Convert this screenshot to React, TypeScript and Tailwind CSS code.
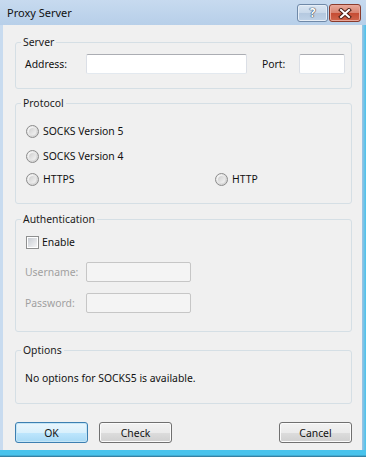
import React from "react";

const font = "font-['Segoe_UI','Noto_Sans',sans-serif] text-[10.4px] leading-[16px] text-[#111]";

function GroupBox({
  title,
  className,
  children,
}: {
  title: string;
  className: string;
  children: React.ReactNode;
}) {
  return (
    <fieldset className={`min-w-0 border border-[#d5dfe5] rounded-[3px] ${className}`}>
      <legend className="ml-[5px] px-[2px] leading-[14px] text-[#1a1a1a]">{title}</legend>
      {children}
    </fieldset>
  );
}

function Radio({ label }: { label: string }) {
  return (
    <span className="flex items-center">
      <span className="w-[13px] h-[13px] rounded-full border border-[#8c8c8c] bg-[radial-gradient(circle_at_35%_35%,#fdfdfd_0%,#e6e6e6_45%,#c4c4c4_100%)] flex items-center justify-center">
        <span className="w-[7px] h-[7px] rounded-full bg-[linear-gradient(135deg,#cfcfcf,#f4f4f4)]" />
      </span>
      <span className="ml-[4px]">{label}</span>
    </span>
  );
}

function TextBox({ width, disabled }: { width: string; disabled?: boolean }) {
  return (
    <div
      className={`${width} h-[20px] rounded-[2px] border ${
        disabled
          ? "bg-[#f4f4f4] border-[#c6c6c6]"
          : "bg-white border-[#abadb3] border-x-[#dbdfe6] border-b-[#e3e9ef]"
      }`}
    />
  );
}

function Button({ label, primary }: { label: string; primary?: boolean }) {
  return (
    <div
      className={`w-[73px] h-[21px] rounded-[3px] border flex items-center justify-center ${
        primary
          ? "border-[#3c7fb1] shadow-[inset_0_0_0_1px_#c4e5f6] bg-[linear-gradient(#eaf6fd_0%,#d9f0fc_50%,#bee6fd_50%,#a7d9f5_100%)]"
          : "border-[#707070] shadow-[inset_0_0_0_1px_#fbfbfb] bg-[linear-gradient(#f2f2f2_0%,#ebebeb_50%,#dddddd_50%,#cfcfcf_100%)]"
      }`}
    >
      {label}
    </div>
  );
}

export default function App() {
  return (
    <div className={`w-[366px] h-[457px] flex flex-col bg-[#bcd4ec] ${font}`}>
      {/* title bar */}
      <div className="h-[25px] flex items-start bg-[linear-gradient(#c7daef,#b7cfe9)]">
        <span className="pl-[7px] pt-[5px] text-[11px]">Proxy Server</span>
        <div className="ml-auto mt-[4px] mr-[5px] flex gap-[1px]">
          <div className="w-[31px] h-[18px] rounded-[3px] border border-[#6f89a8] shadow-[inset_0_0_0_1px_#e6eef7] bg-[linear-gradient(#dbe6f2_0%,#c8d8ea_50%,#b4c8df_50%,#bfd2e7_100%)] flex items-center justify-center">
            <span className="text-white font-bold text-[12px] leading-[12px] [text-shadow:0_0_1px_#2d3e52,0_0_1px_#2d3e52,0_0_1px_#2d3e52]">?</span>
          </div>
          <div className="w-[32px] h-[18px] rounded-[3px] border border-[#8a3b2c] shadow-[inset_0_0_0_1px_#e9a79a] bg-[linear-gradient(#e8a99b_0%,#d8826f_50%,#c54b32_50%,#d0664c_100%)] flex items-center justify-center">
            <svg width="14" height="11" viewBox="0 0 14 11">
              <path d="M3 2 L11 9 M11 2 L3 9" stroke="#4a1d14" strokeWidth="4" strokeLinecap="square" />
              <path d="M3 2 L11 9 M11 2 L3 9" stroke="#ffffff" strokeWidth="2" strokeLinecap="square" />
            </svg>
          </div>
        </div>
      </div>

      <div className="flex-1 flex">
        <div className="w-[3px] bg-[#c8dbef]" />
        {/* client area */}
        <div className="flex-1 bg-[#f0f0f0] pl-[12px] pr-[10px] flex flex-col">
          <GroupBox title="Server" className="mt-[10px] pb-[14px]">
            <div className="mt-[5px] pl-[9px] flex items-center">
              <span className="w-[61px]">Address:</span>
              <TextBox width="w-[161px]" />
              <span className="ml-[15px] w-[37px]">Port:</span>
              <TextBox width="w-[46px]" />
            </div>
          </GroupBox>

          <GroupBox title="Protocol" className="mt-[7px] pb-[16px]">
            <div className="mt-[13px] pl-[10px] h-[16px] flex items-center">
              <Radio label="SOCKS Version 5" />
            </div>
            <div className="mt-[9px] pl-[10px] h-[16px] flex items-center">
              <Radio label="SOCKS Version 4" />
            </div>
            <div className="mt-[7px] pl-[10px] h-[16px] flex items-center">
              <div className="w-[189px]">
                <Radio label="HTTPS" />
              </div>
              <Radio label="HTTP" />
            </div>
          </GroupBox>

          <GroupBox title="Authentication" className="mt-[8px] pb-[18px]">
            <div className="mt-[8px] pl-[10px] h-[16px] flex items-center">
              <span className="w-[13px] h-[13px] border border-[#8e8f8f] bg-white p-[1px]">
                <span className="block w-full h-full bg-[linear-gradient(135deg,#c8ccd2,#f5f5f6)]" />
              </span>
              <span className="ml-[3px]">Enable</span>
            </div>
            <div className="mt-[12px] pl-[9px] flex items-center">
              <span className="w-[61px] text-[#a0a0a0]">Username:</span>
              <TextBox width="w-[105px]" disabled />
            </div>
            <div className="mt-[11px] pl-[9px] flex items-center">
              <span className="w-[61px] text-[#a0a0a0]">Password:</span>
              <TextBox width="w-[105px]" disabled />
            </div>
          </GroupBox>

          <GroupBox title="Options" className="mt-[11px] pb-[17px]">
            <div className="mt-[13px] pl-[9px] h-[16px] flex items-center">
              No options for SOCKS5 is available.
            </div>
          </GroupBox>

          <div className="mt-[18px] flex">
            <Button label="OK" primary />
            <div className="ml-[11px]">
              <Button label="Check" />
            </div>
            <div className="ml-auto">
              <Button label="Cancel" />
            </div>
          </div>
        </div>
        <div className="w-[4px] bg-[linear-gradient(90deg,#9fc3e3,#49c3ec)]" />
      </div>
      <div className="h-[7px] bg-[linear-gradient(#49c3ec_0%,#49c3ec_70%,#2f6f8f_100%)]" />
    </div>
  );
}
